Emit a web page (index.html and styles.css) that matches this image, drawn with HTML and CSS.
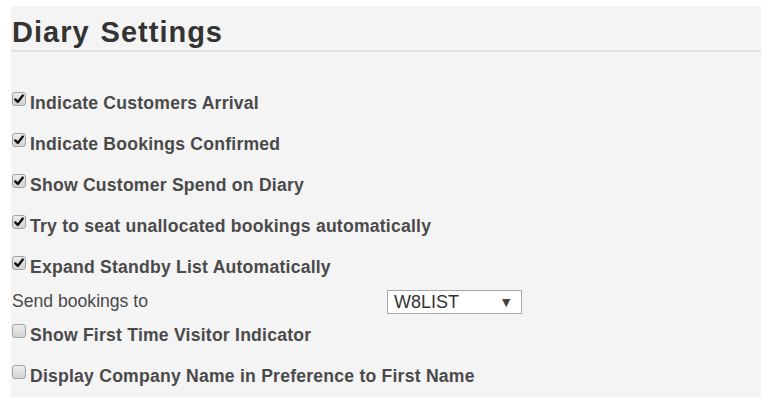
FILE: index.html
```html
<!DOCTYPE html>
<html lang="en">
<head>
<meta charset="utf-8">
<title>Diary Settings</title>
<link rel="stylesheet" href="styles.css">
</head>
<body>
<div class="panel">
  <h1 class="title">Diary Settings</h1>
  <div class="settings">
    <div class="row"><span class="cb checked"><svg viewBox="0 0 14 14" width="14" height="14"><path d="M3.3 7.4 L5.8 10 L10.8 3.6" /></svg></span><label>Indicate Customers Arrival</label></div>
    <div class="row"><span class="cb checked"><svg viewBox="0 0 14 14" width="14" height="14"><path d="M3.3 7.4 L5.8 10 L10.8 3.6" /></svg></span><label>Indicate Bookings Confirmed</label></div>
    <div class="row"><span class="cb checked"><svg viewBox="0 0 14 14" width="14" height="14"><path d="M3.3 7.4 L5.8 10 L10.8 3.6" /></svg></span><label>Show Customer Spend on Diary</label></div>
    <div class="row"><span class="cb checked"><svg viewBox="0 0 14 14" width="14" height="14"><path d="M3.3 7.4 L5.8 10 L10.8 3.6" /></svg></span><label>Try to seat unallocated bookings automatically</label></div>
    <div class="row"><span class="cb checked"><svg viewBox="0 0 14 14" width="14" height="14"><path d="M3.3 7.4 L5.8 10 L10.8 3.6" /></svg></span><label>Expand Standby List Automatically</label></div>
    <div class="row send">
      <span class="send-label">Send bookings to</span>
      <div class="select"><span class="select-value">W8LIST</span><span class="select-arrow">&#9660;</span></div>
    </div>
    <div class="row"><span class="cb"></span><label>Show First Time Visitor Indicator</label></div>
    <div class="row"><span class="cb"></span><label>Display Company Name in Preference to First Name</label></div>
  </div>
</div>
</body>
</html>
```
FILE: styles.css
```css
html, body {
  margin: 0;
  padding: 0;
  background: #ffffff;
}
body {
  font-family: "Liberation Sans", Arial, sans-serif;
}
.panel {
  margin: 6px 0 0 11px;
  width: 750px;
  height: 391px;
  background: #f4f4f4;
}
.title {
  margin: 0;
  padding: 8px 0 0 1px;
  height: 36px;
  font-size: 29px;
  line-height: 36px;
  font-weight: bold;
  color: #333333;
  letter-spacing: 1px;
  word-spacing: 2px;
  border-bottom: 2px solid #e2e2e2;
}
.settings {
  padding: 31px 0 0 1px;
}
.row {
  height: 41px;
  line-height: 41px;
  font-size: 17.6px;
  font-weight: bold;
  color: #4a4a4a;
  white-space: nowrap;
}
.row label {
  letter-spacing: 0.22px;
}
.cb {
  display: inline-block;
  width: 14px;
  height: 14px;
  margin: 0 4px 3px 0;
  vertical-align: baseline;
  box-sizing: border-box;
  border: 1px solid #a3a3a3;
  border-radius: 3px;
  background: linear-gradient(#ececec, #d4d4d4);
  position: relative;
}
.cb svg {
  position: absolute;
  left: -1px;
  top: -1px;
  width: 14px;
  height: 14px;
}
.cb svg path {
  fill: none;
  stroke: #111111;
  stroke-width: 2.4;
  stroke-linecap: round;
  stroke-linejoin: round;
}
.row.send {
  height: 27px;
  line-height: 27px;
  display: flex;
  align-items: center;
  font-weight: normal;
}
.send-label {
  width: 375px;
  color: #4a4a4a;
}
.select {
  box-sizing: border-box;
  width: 135px;
  height: 24px;
  border: 1px solid #a6a6a6;
  background: #ffffff;
  display: flex;
  align-items: center;
  justify-content: space-between;
  padding: 0 8px 0 6px;
  line-height: 22px;
  font-size: 18px;
  color: #333333;
}
.select-arrow {
  font-size: 14px;
  color: #444444;
}
```
